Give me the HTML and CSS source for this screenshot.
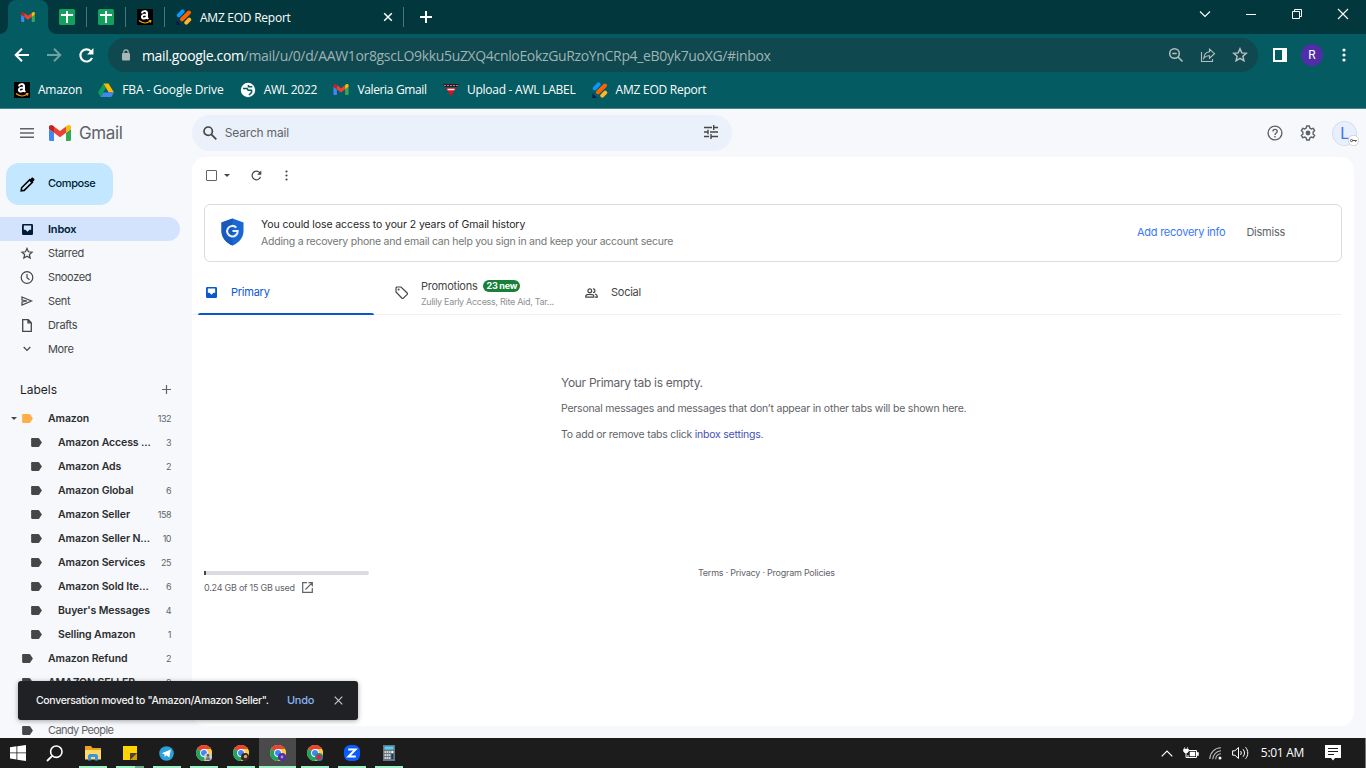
FILE: index.html
```html
<!DOCTYPE html>
<html lang="en">
<head>
  <meta charset="UTF-8" />
  <meta name="viewport" content="width=device-width, initial-scale=1.0" />
  <title>Gmail</title>
  <link rel="stylesheet" href="styles.css">
</head>
<body>
  <!-- shared icons -->
  <svg class="defs" width="0" height="0">
    <symbol id="gmail" viewBox="0 0 22 16">
      <path fill="#4285f4" d="M0 4l5 3.7V16H1.5A1.5 1.5 0 0 1 0 14.5z"/>
      <path fill="#34a853" d="M17 7.7L22 4v10.500a1.500 1.500 0 0 1-1.500 1.500H17z"/>
      <path fill="#ea4335" d="M5 1.500l6 4.600 6-4.600v6.300l-6 4.500-6-4.500z"/>
      <path fill="#c5221f" d="M0 2.200C0 .1 2.300-.6 3.800.6L5 1.500v6.300L0 4z"/>
      <path fill="#fbbc04" d="M22 2.200c0-2.100-2.300-2.800-3.800-1.600L17 1.500v6.300L22 4z"/>
    </symbol>
    <symbol id="sheet" viewBox="0 0 16 16">
      <rect width="16" height="16" rx="1.500" fill="#12a05c"/>
      <path d="M2 6h12M8 2v12" stroke="#fff" stroke-width="2"/>
    </symbol>
    <symbol id="amazon" viewBox="0 0 16 16">
      <rect width="16" height="16" fill="#000"/>
      <path d="M5 4.300C5.300 1.500 10 1.300 10 4.300V8.500l1.200 1.500M10 5.400C7 5.300 4.900 6 4.900 7.900c0 2.300 4.100 2.200 5.100-.6" fill="none" stroke="#fff" stroke-width="2"/>
      <path d="M2 11.500c3.500 3 8 3 11 .8M11.800 11.600h2l-.4 2" fill="none" stroke="#f90" stroke-width="1.200"/>
    </symbol>
    <symbol id="report" viewBox="0 0 16 16">
      <g stroke-width="4" stroke-linecap="round">
        <path d="M2.800 6.400L6.600 2.400" stroke="#0a97ff"/>
        <path d="M6 10.300L13 3.500" stroke="#ff6100"/>
        <path d="M10.300 13.600l2.900-2.900" stroke="#ffb629"/>
      </g>
      <path d="M.5 11.500L5 16H.5z" fill="#0a1551"/>
    </symbol>
    <symbol id="drive" viewBox="0 0 16 16">
      <path d="M5.500 1.500L8 5.800 2.700 15 0 10.600z" fill="#0f9d58"/>
      <path d="M5.500 1.500h5L16 10.600h-5.300z" fill="#ffba00"/>
      <path d="M5.300 10.600H16L13.300 15H2.700z" fill="#4285f4"/>
    </symbol>
    <symbol id="globe" viewBox="0 0 16 16">
      <circle cx="8" cy="8" r="7.200" fill="#fff"/>
      <path d="M3 6.500h4l1.200 1.800h3.300v2.200L9 13M8.500 3v1.800h3.800" fill="none" stroke="#045b61" stroke-width="1.600"/>
    </symbol>
    <symbol id="upload" viewBox="0 0 16 16">
      <path d="M0 2h16l-1.500 3h-13z" fill="#351520"/>
      <path d="M1 3.500h14" stroke="#c77d77" stroke-dasharray="2 1"/>
      <path d="M3 6h10l-5 8z" fill="#e80c1f"/>
      <path d="M4.500 7.500h7" stroke="#fff" stroke-width="1.500"/>
    </symbol>
    <symbol id="star" viewBox="0 0 16 16">
      <path d="M8 1.800l1.800 4.100 4.500.4-3.400 3 1 4.400L8 11.400l-3.900 2.300 1-4.400-3.400-3 4.500-.4z" fill="none" stroke="currentColor" stroke-width="1.500"/>
    </symbol>
    <symbol id="inbox" viewBox="0 0 12 12">
      <path fill="currentColor" fill-rule="evenodd" d="M1.300 0h9.400A1.300 1.300 0 0 1 12 1.300v9.400a1.300 1.300 0 0 1-1.300 1.300H1.300A1.300 1.300 0 0 1 0 10.700V1.300A1.300 1.300 0 0 1 1.300 0zM2 1.600v4.600h1.800L6 8.400l2.200-2.200H10V1.600z"/>
    </symbol>
    <symbol id="label" viewBox="0 0 12 10">
      <path fill="currentColor" d="M1.300 0h6.400c.6 0 1 .2 1.300.6L12 5 9 9.400c-.3.400-.7.600-1.300.6H1.300C.5 10 0 9.500 0 8.700V1.300C0 .5.500 0 1.300 0z"/>
    </symbol>
    <symbol id="refresh" viewBox="0 0 16 16">
      <path d="M13.200 10.200A5.700 5.700 0 1 1 12 3.900l1.300 1.300" fill="none" stroke="currentColor" stroke-width="2"/>
      <path d="M14.500 1v6h-6z" fill="currentColor"/>
    </symbol>
    <symbol id="chrome" viewBox="0 0 16 16">
      <circle cx="8" cy="8" r="8" fill="#ffcd40"/>
      <path d="M8 8L1.100 4A8 8 0 0 1 14.900 4z" fill="#ea4335"/>
      <path d="M8 8L1.100 4A8 8 0 0 0 8 16l3.500-6z" fill="#1ea362"/>
      <path d="M8 4h6.900A8 8 0 0 1 8 16l3.500-6z" fill="#ffcd40"/>
      <circle cx="8" cy="8" r="3.900" fill="#fff"/>
      <circle cx="8" cy="8" r="3" fill="#4285f4"/>
    </symbol>
  </svg>

  <div class="tabs">
    <div class="tab active"><svg width="14" height="10"><use href="#gmail"/></svg></div>
    <div class="tab"><svg width="16" height="16"><use href="#sheet"/></svg></div>
    <div class="tab"><svg width="16" height="16"><use href="#sheet"/></svg></div>
    <div class="tab"><svg width="16" height="16"><use href="#amazon"/></svg></div>
    <div class="tab wide">
      <svg width="16" height="16"><use href="#report"/></svg>
      <span>AMZ EOD Report</span>
      <svg class="close" width="10" height="10" viewBox="0 0 10 10"><path d="M1.200 1.200l7.600 7.600M8.800 1.200L1.200 8.800" stroke="#fff" stroke-width="1.500"/></svg>
    </div>
    <svg class="new-tab" width="12" height="12" viewBox="0 0 12 12"><path d="M6 0v12M0 6h12" stroke="#fff" stroke-width="2"/></svg>
    <div class="window-btns">
      <svg width="12" height="12" viewBox="0 0 12 12"><path d="M1 3.500l5 5 5-5" fill="none" stroke="#fff" stroke-width="1.100"/></svg>
      <svg width="12" height="12" viewBox="0 0 12 12"><path d="M1 6.500h10" stroke="#fff"/></svg>
      <svg width="12" height="12" viewBox="0 0 12 12"><path d="M1.500 3.500h7v7h-7zM3.500 3.500v-2h7v7h-2" fill="none" stroke="#fff"/></svg>
      <svg width="12" height="12" viewBox="0 0 12 12"><path d="M1 1l10 10M11 1L1 11" stroke="#fff" stroke-width="1.100"/></svg>
    </div>
  </div>

  <div class="toolbar">
    <div class="nav-btns">
      <svg width="16" height="16" viewBox="0 0 16 16"><path d="M15 8H2M8 1.700L1.700 8 8 14.300" fill="none" stroke="#fff" stroke-width="2"/></svg>
      <svg width="16" height="16" viewBox="0 0 16 16"><path d="M1 8h13M8 1.700L14.300 8 8 14.300" fill="none" stroke="#6fa0a4" stroke-width="2"/></svg>
      <svg class="white" width="17" height="17"><use href="#refresh"/></svg>
    </div>
    <div class="omnibox">
      <svg width="8" height="12" viewBox="0 0 8 12"><rect y="4" width="8" height="7.500" rx="1" fill="#a9b6b8"/><path d="M1.800 5V3a2.200 2.200 0 0 1 4.400 0v2" fill="none" stroke="#a9b6b8" stroke-width="1.200"/></svg>
      <span class="url"><b>mail.google.com</b>/mail/u/0/d/AAW1or8gscLO9kku5uZXQ4cnloEokzGuRzoYnCRp4_eB0yk7uoXG/#inbox</span>
      <svg width="16" height="16" viewBox="0 0 16 16"><circle cx="6.500" cy="6.500" r="4.800" fill="none" stroke="#b5c0c2" stroke-width="1.500"/><path d="M4.300 6.500h4.400M10 10l4.500 4.500" stroke="#b5c0c2" stroke-width="1.500"/></svg>
      <svg width="16" height="16" viewBox="0 0 16 16"><path d="M1.500 5v9.500h11V12M9.500 2.200l5 4.500-5 4.500V8.800C7 8.600 5 9.500 3.800 11.300 4 7.800 6.200 5 9.500 4.700z" fill="none" stroke="#b5c0c2" stroke-width="1.100"/></svg>
      <svg class="pale" width="16" height="16"><use href="#star"/></svg>
    </div>
    <svg width="14" height="14" viewBox="0 0 14 14"><path d="M0 0h14v14H0zM2 2v10h7V2z" fill="#fff" fill-rule="evenodd"/></svg>
    <span class="profile">R</span>
    <svg width="4" height="14" viewBox="0 0 4 14" fill="#fff"><circle cx="2" cy="2" r="1.600"/><circle cx="2" cy="7" r="1.600"/><circle cx="2" cy="12" r="1.600"/></svg>
  </div>

  <div class="bookmarks">
    <span class="bm1"><svg width="16" height="16"><use href="#amazon"/></svg>Amazon</span>
    <span class="bm2"><svg width="16" height="16"><use href="#drive"/></svg>FBA - Google Drive</span>
    <span class="bm3"><svg width="16" height="16"><use href="#globe"/></svg>AWL 2022</span>
    <span class="bm4"><svg width="16" height="11"><use href="#gmail"/></svg>Valeria Gmail</span>
    <span class="bm5"><svg width="16" height="16"><use href="#upload"/></svg>Upload - AWL LABEL</span>
    <span class="bm6"><svg width="16" height="16"><use href="#report"/></svg>AMZ EOD Report</span>
  </div>

  <div class="gmail">
    <div class="header">
      <svg width="14" height="10" viewBox="0 0 14 10"><path d="M0 .8h14M0 5h14M0 9.200h14" stroke="#5f6368" stroke-width="1.400"/></svg>
      <svg class="logo" width="22" height="16"><use href="#gmail"/></svg>
      <span class="brand">Gmail</span>
      <div class="search">
        <svg width="14" height="14" viewBox="0 0 14 14"><circle cx="5.200" cy="5.200" r="4.200" fill="none" stroke="#444746" stroke-width="1.700"/><path d="M8.300 8.300l5 5" stroke="#444746" stroke-width="1.800"/></svg>
        <span>Search mail</span>
        <svg class="tune" width="14" height="14" viewBox="0 0 14 14"><path d="M0 2.500h8M9.700 2.500H14M9.700 0v5M0 7h4M6 7h8M4 4.700v4.600M0 11.500h5M7 11.500h7M7 9v5" stroke="#444746" stroke-width="1.400"/></svg>
      </div>
      <svg width="16" height="16" viewBox="0 0 16 16" fill="none" stroke="#5f6368"><circle cx="8" cy="8" r="6.900" stroke-width="1.400"/><path d="M5.900 6.400c0-2.700 4.300-2.600 4.300 0C10.200 8 8 8.100 8 9.900M8 11v1.500" stroke-width="1.400"/></svg>
      <svg width="16" height="16" viewBox="0 0 16 16"><path d="M6.700 1h2.600l.5 2 1.500.9 2-.6 1.300 2.300L13.100 7v2l1.500 1.400-1.300 2.300-2-.6-1.500.9-.5 2H6.700l-.5-2-1.500-.9-2 .6-1.300-2.300L2.900 9V7L1.400 5.600l1.300-2.300 2 .6L6.200 3z" fill="none" stroke="#5f6368" stroke-width="1.400"/><circle cx="8" cy="8" r="2.400" fill="#5f6368"/></svg>
      <div class="account">L<svg width="11" height="11" viewBox="0 0 11 11"><circle cx="5.500" cy="5.500" r="5.200" fill="#fff" stroke="#bbb" stroke-width=".6"/><circle cx="3.500" cy="5.500" r="1.100" fill="none" stroke="#555"/><path d="M4.600 5.500h4.200M7.700 5.500v1.400" stroke="#555"/></svg></div>
    </div>

    <div class="content">
      <div class="sidebar">
        <div class="compose">
          <svg width="15" height="15" viewBox="0 0 15 15"><path d="M1.200 13.800l.4-3L9.800 2.600l2.600 2.600-8.200 8.200z" fill="none" stroke="#000" stroke-width="1.600"/><path d="M9 3.400L11.500.9c.6-.6 1.200-.5 1.700 0l.9.900c.5.500.5 1.200 0 1.700L11.600 6z"/></svg>
          <span>Compose</span>
        </div>
        <div class="nav">
          <div class="selected"><svg width="11" height="11"><use href="#inbox"/></svg>Inbox</div>
          <div><svg width="13" height="13" viewBox="0 0 16 16"><use href="#star" width="16" height="16"/></svg>Starred</div>
          <div><svg width="13" height="13" viewBox="0 0 13 13" fill="none" stroke="currentColor" stroke-width="1.200"><circle cx="6.500" cy="6.500" r="5.800"/><path d="M6.500 3v3.700l2.500 2"/></svg>Snoozed</div>
          <div><svg width="12" height="10" viewBox="0 0 12 10"><path d="M1 1l9.500 4L1 9V6l5-1-5-1z" fill="none" stroke="currentColor" stroke-width="1.200"/></svg>Sent</div>
          <div><svg width="10" height="13" viewBox="0 0 10 13"><path d="M.7.700h5.600l3 3v8.600H.7zM6 .7v3.200h3.300" fill="none" stroke="currentColor" stroke-width="1.300"/></svg>Drafts</div>
          <div><svg width="8" height="6" viewBox="0 0 8 6"><path d="M.7 1L4 4.500 7.300 1" fill="none" stroke="currentColor" stroke-width="1.200"/></svg>More</div>
        </div>
        <div class="labels-head">Labels<svg width="9" height="9" viewBox="0 0 9 9"><path d="M4.500 0v9M0 4.500h9" stroke="#5f6368" stroke-width="1.200"/></svg></div>
        <div class="labels">
          <div class="parent"><i class="caret"></i><svg width="11" height="9"><use href="#label"/></svg><b>Amazon</b><span>132</span></div>
          <div class="sub"><svg width="11" height="9"><use href="#label"/></svg><b>Amazon Access ...</b><span>3</span></div>
          <div class="sub"><svg width="11" height="9"><use href="#label"/></svg><b>Amazon Ads</b><span>2</span></div>
          <div class="sub"><svg width="11" height="9"><use href="#label"/></svg><b>Amazon Global</b><span>6</span></div>
          <div class="sub"><svg width="11" height="9"><use href="#label"/></svg><b>Amazon Seller</b><span>158</span></div>
          <div class="sub"><svg width="11" height="9"><use href="#label"/></svg><b>Amazon Seller N...</b><span>10</span></div>
          <div class="sub"><svg width="11" height="9"><use href="#label"/></svg><b>Amazon Services</b><span>25</span></div>
          <div class="sub"><svg width="11" height="9"><use href="#label"/></svg><b>Amazon Sold Ite...</b><span>6</span></div>
          <div class="sub"><svg width="11" height="9"><use href="#label"/></svg><b>Buyer's Messages</b><span>4</span></div>
          <div class="sub"><svg width="11" height="9"><use href="#label"/></svg><b>Selling Amazon</b><span>1</span></div>
          <div><svg width="11" height="9"><use href="#label"/></svg><b>Amazon Refund</b><span>2</span></div>
          <div><svg width="11" height="9"><use href="#label"/></svg><b>AMAZON SELLER</b><span>2</span></div>
          <div></div>
          <div class="read"><svg width="11" height="9"><use href="#label"/></svg><b>Candy People</b></div>
        </div>
      </div>

      <div class="main">
        <div class="actions">
          <i class="checkbox"></i><i class="caret"></i>
          <svg class="reload" width="11" height="11" viewBox="0 0 16 16"><path d="M13.900 10A6.300 6.300 0 1 1 12.500 3.500l1.500 1.500" fill="none" stroke="#444746" stroke-width="1.800"/><path d="M15 .8v6H9z" fill="#444746"/></svg>
          <svg width="3" height="11" viewBox="0 0 3 11" fill="#444746"><circle cx="1.500" cy="1.500" r="1.100"/><circle cx="1.500" cy="5.500" r="1.100"/><circle cx="1.500" cy="9.500" r="1.100"/></svg>
        </div>

        <div class="notice">
          <svg width="23" height="28" viewBox="0 0 23 28"><path d="M11.500.5L22.500 4.500V13c0 6.500-4.500 12-11 14.500C5 25 .5 19.500.5 13V4.500z" fill="#1967d2"/><path d="M11.500.5v27C5 25 .5 19.500.5 13V4.500z" fill="#185abc"/><path d="M15.300 9.600A5.300 5.300 0 1 0 16.700 13H11.500" fill="none" stroke="#e8f0fe" stroke-width="2.100"/></svg>
          <div class="notice-text">
            <p class="n1">You could lose access to your 2 years of Gmail history</p>
            <p class="n2">Adding a recovery phone and email can help you sign in and keep your account secure</p>
          </div>
          <a class="recovery">Add recovery info</a>
          <a class="dismiss">Dismiss</a>
        </div>

        <div class="categories">
          <div class="cat primary"><svg width="11" height="11"><use href="#inbox"/></svg><span>Primary</span></div>
          <div class="cat promotions">
            <svg width="13" height="13" viewBox="0 0 13 13"><path d="M1 1.800V6l6 6.200c.5.400 1 .4 1.400 0l3.800-3.800c.4-.4.400-.9 0-1.400L6 1H1.800z" fill="none" stroke="#444746" stroke-width="1.200"/><circle cx="3.600" cy="3.600" r="1" fill="#444746"/></svg>
            <div>
              <p>Promotions<em>23 new</em></p>
              <small>Zulily Early Access, Rite Aid, Tar...</small>
            </div>
          </div>
          <div class="cat social"><svg width="13" height="10" viewBox="0 0 13 10" fill="none" stroke="#444746" stroke-width="1.200"><circle cx="4.800" cy="2.700" r="1.900"/><path d="M.8 9.200V8c0-2.300 8-2.300 8 0v1.200zM8 .9c2.300-.5 2.800 3.400 0 3.600M10 6c1.700.4 2.300 1 2.300 3.200H10"/></svg><span>Social</span></div>
        </div>

        <div class="empty">
          <p class="e1">Your Primary tab is empty.</p>
          <p class="e2">Personal messages and messages that don’t appear in other tabs will be shown here.</p>
          <p class="e3">To add or remove tabs click <a>inbox settings</a>.</p>
        </div>

        <div class="footer">
          <div class="storage">
            <div class="meter"><i></i></div>
            <p><span>0.24 GB of 15 GB used</span><svg width="11" height="11" viewBox="0 0 11 11"><path d="M5 .7H.7v9.600h9.600V6M6.500.7h3.800v3.800M10.300.7L3.500 7.500" fill="none" stroke="#5f6368" stroke-width="1.200"/></svg></p>
          </div>
          <div class="terms">Terms · Privacy · Program Policies</div>
        </div>
      </div>
    </div>
  </div>

  <div class="toast">
    <span>Conversation moved to "Amazon/Amazon Seller".</span>
    <a>Undo</a>
    <svg width="9" height="9" viewBox="0 0 9 9"><path d="M.7.700l7.600 7.600M8.300.7L.7 8.300" stroke="#c4c7c5" stroke-width="1.200"/></svg>
  </div>

  <div class="taskbar">
    <div class="app start"><svg width="16" height="16" viewBox="0 0 16 16" fill="#fff"><path d="M0 2.200l6.500-.9v6.200H0zM7.300 1.200L16 0v7.500H7.300zM0 8.300h6.500v6.200L0 13.600zM7.300 8.300H16V16l-8.700-1.200z"/></svg></div>
    <div class="app find"><svg width="17" height="17" viewBox="0 0 17 17"><circle cx="10.300" cy="6.700" r="5.700" fill="none" stroke="#fff" stroke-width="1.600"/><path d="M6.200 10.800L1 16" stroke="#fff" stroke-width="1.800"/></svg></div>
    <div class="app open"><svg width="16" height="15" viewBox="0 0 16 15"><path d="M0 0h6l1.500 2H16v11H0z" fill="#e9a21b"/><path d="M0 4h16v9.500H0z" fill="#ffd968"/><path d="M3 14.500V9.500L4.500 8h7L13 9.500v5h-3V11H6v3.500z" fill="#3a96dd"/></svg></div>
    <div class="app open double"><svg width="14" height="14" viewBox="0 0 14 14"><path d="M0 0h14v7H7v7H0z" fill="#ffd400"/><path d="M7 7h7l-7 7z" fill="#4b4535"/><path d="M14 7v7H7z" fill="#d79c00"/></svg></div>
    <div class="app open"><svg width="15" height="15" viewBox="0 0 15 15"><circle cx="7.500" cy="7.500" r="7.300" fill="#2ca0da"/><path d="M2.800 7.300l9-3.800-1.500 8-3-2.200-1.500 1.600-.5-2.600z" fill="#fff"/></svg></div>
    <div class="app open"><svg width="16" height="16"><use href="#chrome"/><circle cx="12" cy="12" r="4" fill="#cfd0d2"/><circle cx="12" cy="10.500" r="1.400" fill="#70585a"/><path d="M9.500 15c0-4 5-4 5 0z" fill="#777"/></svg></div>
    <div class="app open"><svg width="16" height="16"><use href="#chrome"/><circle cx="12" cy="12" r="4" fill="#35281e"/><circle cx="12.500" cy="11.500" r="1.700" fill="#d8a681"/></svg></div>
    <div class="app open current"><svg width="16" height="16"><use href="#chrome"/><circle cx="12" cy="12" r="4" fill="#512da8"/><circle cx="12" cy="12" r="1.400" fill="#ac91df"/></svg></div>
    <div class="app open"><svg width="16" height="16"><use href="#chrome"/><circle cx="12" cy="12" r="4" fill="#0c9b80"/><circle cx="12" cy="12" r="2.600" fill="#f01656"/></svg></div>
    <div class="app open"><svg width="16" height="16" viewBox="0 0 16 16"><rect width="16" height="16" rx="6" fill="#0b5cff"/><path d="M4.200 4.500h7.300l-7 7h7.300" fill="none" stroke="#fff" stroke-width="2"/></svg></div>
    <div class="app open"><svg width="12" height="16" viewBox="0 0 12 16"><rect width="12" height="16" fill="#68747e"/><rect x="1.500" y="1.500" width="9" height="3" fill="#50d4f4"/><path d="M1.500 7h6M1.500 10h6M1.500 13h6" stroke="#f0f2f4" stroke-width="1.700" stroke-dasharray="1.700 .5"/><path d="M9.300 6v2" stroke="#fff" stroke-width="2"/><path d="M9.300 9v5" stroke="#0a4174" stroke-width="2"/></svg></div>
    <div class="tray">
      <svg width="12" height="7" viewBox="0 0 12 7"><path d="M.7 6.300L6 1l5.300 5.300" fill="none" stroke="#fff" stroke-width="1.200"/></svg>
      <svg width="16" height="12" viewBox="0 0 16 12"><path d="M5.500 3.500h8v7H5V8" fill="none" stroke="#fff"/><path d="M7 5h5v4H7zM14 5.500h1.500v3H14zM1.500 0v2M4.500 0v2M.5 2h5v2.500L4 6H2L.5 4.500z" fill="#fff" stroke="#fff" stroke-width=".5"/><path d="M3 6v4.500h2" fill="none" stroke="#fff"/></svg>
      <svg width="13" height="13" viewBox="0 0 13 13" fill="none" stroke="#bbb" stroke-width="1.100"><path d="M.8 12C1 5.500 5.500 1 12 .8M3.700 12.300C4 7.500 7.500 4 12 3.800M6.700 12.300c0-3 2.300-5.500 5.300-5.500"/><circle cx="11" cy="11" r="1.500" fill="#fff" stroke="none"/></svg>
      <svg width="17" height="14" viewBox="0 0 17 14" fill="none" stroke="#fff"><path d="M.6 4.800h2.300l3.600-3.300v11L2.900 9.200H.6zM8.500 5c1 1.200 1 2.800 0 4M11 3.200c2 2.200 2 5.400 0 7.600M13.500 1.200c3 3.300 3 8.300 0 11.600"/></svg>
      <span class="time">5:01 AM</span>
      <svg width="16" height="16" viewBox="0 0 16 16"><path d="M0 0h16v13H10l-2 2.500L6 13H0z" fill="#fff"/><path d="M3 3.500h10M3 6.500h10M3 9.500h6" stroke="#1c1c1c"/></svg>
    </div>
    <i class="desktop"></i>
  </div>
</body>
</html>
```
FILE: styles.css
```css
* {
  box-sizing: border-box;
}

body {
  margin: 0;
  width: 1366px;
  height: 768px;
  overflow: hidden;
  display: flex;
  flex-direction: column;
  background: #f6f8fc;
  color: #444746;
  font-family: Inter, sans-serif;
  font-size: 11px;
}

p {
  margin: 0;
}

svg {
  display: block;
  flex: none;
}

.defs {
  position: absolute;
}

/* browser window */
.tabs {
  height: 34px;
  padding-left: 8px;
  display: flex;
  align-items: center;
  background: #02383d;
  color: #fff;
  font-family: "Open Sans", sans-serif;
  font-size: 12px;
}

.tab {
  position: relative;
  width: 39px;
  height: 34px;
  padding-right: 2px;
  display: flex;
  align-items: center;
  justify-content: center;
}

.tab.active {
  width: 40px;
  padding: 0;
  background: #045b61;
  border-radius: 8px 8px 0 0;
}

.tab.active::before,
.tab.active::after {
  content: "";
  position: absolute;
  left: -8px;
  bottom: 0;
  width: 8px;
  height: 8px;
  background: radial-gradient(circle at 0 0, transparent 7.5px, #045b61 8px);
}

.tab.active::after {
  left: 40px;
  background: radial-gradient(circle at 100% 0, transparent 7.5px, #045b61 8px);
}

.tab:not(.active)::after {
  content: "";
  position: absolute;
  right: 0;
  top: 7px;
  width: 1px;
  height: 20px;
  background: #4d7478;
}

.tab.wide {
  width: 239px;
  justify-content: flex-start;
  padding: 0 11px;
}

.tab.wide span {
  margin-left: 8px;
  letter-spacing: -0.25px;
}

.tab .close {
  margin-left: auto;
}

.new-tab {
  margin-left: 16px;
}

.window-btns {
  margin: -6px 17px 0 auto;
  display: flex;
  gap: 34px;
}

.toolbar {
  height: 42px;
  padding: 0 20px 0 14px;
  display: flex;
  align-items: center;
  background: #045b61;
}

.nav-btns {
  width: 94px;
  display: flex;
  gap: 16px;
}

.white {
  color: #fff;
}

.pale {
  color: #b5c0c2;
}

.omnibox {
  width: 1150px;
  height: 34px;
  margin-right: 15px;
  padding: 0 10px 0 14px;
  display: flex;
  align-items: center;
  gap: 16px;
  border-radius: 17px;
  background: #0f484e;
}

.url {
  flex: 1;
  margin-left: -4px;
  color: #9fb3b5;
  font-family: "Open Sans", sans-serif;
  font-size: 14px;
  letter-spacing: -0.34px;
  white-space: nowrap;
}

.url b {
  font-weight: 400;
  color: #fff;
}

.profile {
  width: 22px;
  height: 22px;
  margin: 0 19px 0 14px;
  border-radius: 50%;
  background: #512da8;
  color: #fff;
  font: 12px/22px Roboto, sans-serif;
  text-align: center;
}

.bookmarks {
  height: 33px;
  padding: 0 14px 5px;
  display: flex;
  align-items: center;
  gap: 16.2px;
  background: #045b61;
  border-bottom: 1px solid #43868b;
  color: #fff;
  font-family: "Open Sans", sans-serif;
  font-size: 12px;
}

.bookmarks span {
  display: flex;
  align-items: center;
  gap: 8px;
  white-space: nowrap;
  letter-spacing: -0.25px;
}

.bookmarks .bm2 {
  letter-spacing: -0.13px;
}

.bookmarks .bm4 {
  letter-spacing: -0.35px;
}

/* gmail */
.gmail {
  height: 629px;
  overflow: hidden;
}

.header {
  height: 48px;
  padding: 0 9px 0 20px;
  display: flex;
  align-items: center;
}

.logo {
  margin-left: 15px;
}

.brand {
  width: 112px;
  margin-left: 8px;
  color: #5f6368;
  font-size: 17px;
  letter-spacing: -0.4px;
}

.search {
  width: 541px;
  height: 36px;
  margin: 0 535px 0 1px;
  padding: 0 14px 0 11px;
  display: flex;
  align-items: center;
  border-radius: 18px;
  background: #eaf1fb;
  color: #5f6368;
  font-size: 12px;
}

.search span {
  flex: 1;
  margin-left: 8px;
  padding-bottom: 2px;
  letter-spacing: -0.2px;
}

.search .tune {
  margin-bottom: 2px;
}

.account {
  position: relative;
  width: 25px;
  height: 25px;
  margin-left: 16px;
  border: 1px solid #d3def2;
  border-radius: 50%;
  background: #e8f0fe;
  color: #4374e8;
  font: 16px/23px Roboto, sans-serif;
  text-align: center;
}

.header > .search + svg {
  margin-right: 17px;
}

.account svg {
  position: absolute;
  right: -3px;
  bottom: -1px;
}

.content {
  display: flex;
}

.sidebar {
  width: 192px;
  padding-top: 6px;
}

.compose {
  width: 107px;
  height: 42px;
  margin: 0 0 12px 6px;
  padding-left: 14px;
  display: flex;
  align-items: center;
  gap: 13px;
  border-radius: 13px;
  background: #c2e7ff;
  color: #001d35;
  font-weight: 500;
  letter-spacing: -0.45px;
}

.compose span {
  padding-bottom: 2px;
}

.nav div {
  width: 180px;
  height: 24px;
  display: flex;
  align-items: center;
  letter-spacing: -0.35px;
}

.nav svg {
  width: 14px;
  margin: 0 14px 0 20px;
}

.nav .selected {
  border-radius: 0 12px 12px 0;
  background: #d3e3fd;
  color: #001d35;
  font-weight: 600;
  letter-spacing: -0.2px;
}

.nav .selected svg {
  width: 11px;
  margin: 0 15px 0 22px;
}

.labels-head {
  height: 45px;
  padding: 12px 21px 0 20px;
  display: flex;
  align-items: center;
  justify-content: space-between;
  color: #1f1f1f;
  font-size: 12px;
}

.labels div {
  height: 24px;
  padding: 0 21px 0 22px;
  display: flex;
  align-items: center;
  color: #444746;
}

.labels div.sub {
  padding-left: 31px;
}

.labels .parent {
  position: relative;
}

.parent svg {
  color: #ffad46;
}

.caret {
  border: 3px solid transparent;
  border-top-color: #444746;
  border-bottom: 0;
}

.parent .caret {
  position: absolute;
  left: 11px;
}

.labels b {
  margin-left: 15px;
  font-size: 10.5px;
  font-weight: 600;
  letter-spacing: -0.1px;
  color: #2b2c2e;
  white-space: nowrap;
}

.labels .sub b {
  margin-left: 16px;
}

.labels .read b {
  font-size: 11px;
  font-weight: 400;
  letter-spacing: -0.6px;
  color: #5f6368;
}

.labels span {
  margin-left: auto;
  color: #5f6368;
  font-size: 9px;
  letter-spacing: -0.5px;
}

.main {
  width: 1162px;
  height: 569px;
  border-radius: 14px;
  background: #fff;
}

.actions {
  height: 37px;
  padding-left: 14px;
  display: flex;
  align-items: center;
}

.checkbox {
  width: 11px;
  height: 11px;
  margin-right: 7px;
  border: 1.5px solid #5f6368;
  border-radius: 1px;
}

.reload {
  margin: 0 23px 0 21px;
}

.notice {
  height: 58px;
  margin: 10px 12px 0;
  padding: 0 56px 3px 16px;
  display: flex;
  align-items: center;
  border: 1px solid #dadce0;
  border-radius: 6px;
}

.notice-text {
  flex: 1;
  margin-left: 17px;
  padding-top: 2px;
  line-height: 17px;
  font-size: 10.5px;
}

.n1 {
  color: #1f1f1f;
  letter-spacing: -0.09px;
}

.n2 {
  color: #747775;
  letter-spacing: -0.23px;
}

.recovery {
  margin-right: 21px;
  color: #3978f4;
  letter-spacing: -0.25px;
}

.dismiss {
  color: #5f6368;
  letter-spacing: -0.25px;
}

.categories {
  height: 53px;
  margin: 0 12px 0 0;
  display: flex;
  border-bottom: 1px solid #f0f2f2;
}

.cat {
  position: relative;
  display: flex;
  align-items: center;
  padding-top: 9px;
}

.primary {
  width: 190px;
  padding-left: 14px;
  color: #0b57d0;
}

.primary::after {
  content: "";
  position: absolute;
  left: 6px;
  bottom: -1px;
  width: 176px;
  height: 2px;
  background: #0b57d0;
  border-radius: 2px 2px 0 0;
}

.primary span,
.social span {
  margin-left: 14px;
  padding-bottom: 1px;
  letter-spacing: -0.25px;
}

.promotions {
  width: 190px;
  padding-left: 13px;
}

.promotions div {
  margin-left: 13px;
  padding-top: 2px;
  line-height: 15px;
}

.promotions p {
  display: flex;
  align-items: center;
  letter-spacing: -0.25px;
}

.promotions em {
  height: 12px;
  margin-left: 6px;
  padding: 0 3px;
  border-radius: 6px;
  background: #188038;
  color: #fff;
  font-size: 9px;
  font-style: normal;
  font-weight: 700;
  line-height: 12px;
}

.promotions small {
  display: block;
  color: #8e9192;
  font-size: 9px;
  letter-spacing: -0.3px;
  white-space: nowrap;
}

.social {
  padding-left: 13px;
}

.social span {
  margin-left: 13px;
}

.empty {
  height: 253px;
  padding: 58px 0 0 369px;
  color: #5f6368;
  font-size: 10.5px;
  line-height: 26px;
  letter-spacing: -0.21px;
}

.e1 {
  font-size: 12px;
  line-height: 19px;
  padding-bottom: 4px;
  letter-spacing: -0.3px;
}

.e3 {
  letter-spacing: -0.23px;
}

.empty a {
  color: #3f51b5;
}

.footer {
  display: flex;
  padding-left: 12px;
  color: #5f6368;
  font-size: 9px;
  letter-spacing: -0.24px;
}

.storage {
  width: 494px;
  padding-top: 3px;
}

.terms {
  margin-top: -1px;
}

.meter {
  width: 165px;
  height: 4px;
  border-radius: 2px;
  background: #dadce0;
}

.meter i {
  display: block;
  width: 2px;
  height: 4px;
  background: #444746;
}

.storage p {
  display: flex;
  align-items: center;
  gap: 7px;
  margin-top: 7px;
}

/* toast */
.toast {
  position: absolute;
  left: 18px;
  top: 681px;
  width: 340px;
  height: 39px;
  padding: 0 15px 0 18px;
  display: flex;
  align-items: center;
  border-radius: 3px;
  background: #202124;
  box-shadow: 0 1px 5px rgba(0, 0, 0, 0.35);
  color: #f2f2f2;
  font-size: 10.5px;
  font-weight: 500;
  letter-spacing: -0.34px;
  white-space: nowrap;
}

.toast a {
  margin: 0 20px 1px auto;
  color: #8ab4f8;
  font-size: 11px;
  letter-spacing: -0.3px;
}

/* taskbar */
.taskbar {
  height: 30px;
  display: flex;
  background: #1c1c1c;
}

.app {
  width: 37px;
  height: 30px;
  display: flex;
  align-items: center;
  justify-content: center;
  position: relative;
}

.app.start,
.app.find {
  width: 36px;
}

.app.find {
  margin-right: 2px;
}

.app.open::after {
  content: "";
  position: absolute;
  left: 5px;
  right: 4px;
  bottom: 0;
  height: 2px;
  background: #9ff0c5;
}

.app.double::after {
  border-right: 9px solid #6fa98c;
}

.app.current {
  background: #4a4a4a;
}

.app.current::after {
  left: 0;
  right: 0;
}

.tray {
  margin: 0 24px 0 auto;
  display: flex;
  align-items: center;
  color: #fff;
  font-family: "Open Sans", sans-serif;
  font-size: 12px;
}

.tray svg {
  margin-right: 10px;
}

.tray .time {
  margin: 0 21px 0 2px;
  padding-bottom: 2px;
  letter-spacing: -0.3px;
}

.tray svg:last-child {
  margin: 0;
}

.desktop {
  width: 1px;
  background: #777;
}
```
